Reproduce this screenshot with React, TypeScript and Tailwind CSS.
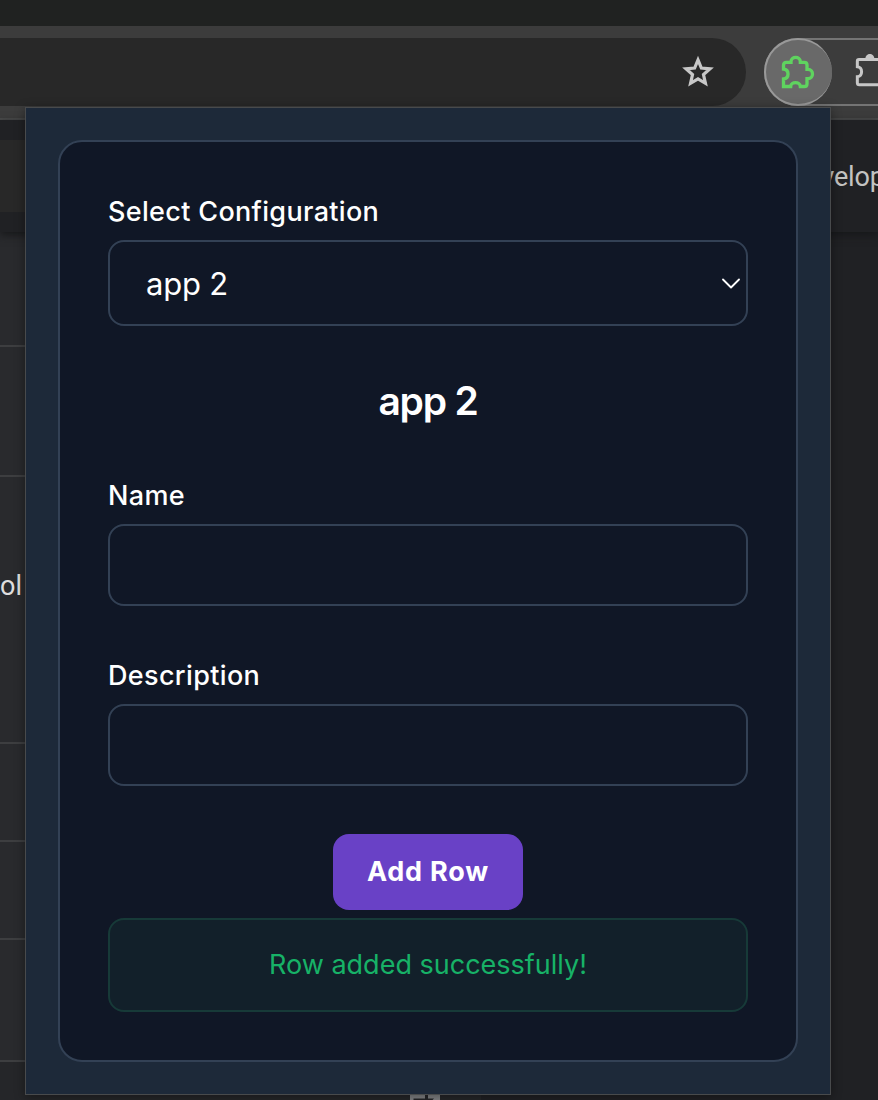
import { useState } from "react";

function StarIcon() {
  return (
    <svg className="h-[34px] w-[34px]" viewBox="0 0 96 96" fill="none" stroke="#c7c7c7" strokeWidth="9">
      <path d="M48 14 L57.500 37 L82 39 L63.500 55.500 L69 80 L48 67.500 L27 80 L32.500 55.500 L14 39 L38.500 37 Z" />
    </svg>
  );
}

function ExtensionIcon() {
  return (
    <svg className="h-9 w-9" viewBox="360 162 108 108" fill="none" stroke="#5fd35f" strokeWidth="10">
      <path d="M370.500 259.500 V237 C379 236 384 231 384 222 C384 213 379 208 370.500 207 V196 Q370.500 187 379 187 H393 V185 C393 168 421 168 421 185 V187 H433 Q441 187 441 195 V208 H444 C462 208 462 236 444 236 H441 V251 Q441 259.500 433 259.500 H421 C420 244 393 244 392 259.500 Z" />
    </svg>
  );
}

function PuzzleMenuIcon() {
  return (
    <svg className="h-9 w-6 shrink-0" viewBox="582 162 72 108" fill="none" stroke="#c7c7c7" strokeWidth="9">
      <path d="M660 178.500 H597 Q592 178.500 592 184 V200 C609 202 609 228 592 230 V248 Q592 254 598 254 H660" />
      <path d="M616 177 C616 157 643 157 643 177 Z" fill="#c7c7c7" stroke="none" />
    </svg>
  );
}

function OpenIcon() {
  return (
    <svg className="h-8 w-[30px]" viewBox="0 0 30 32" fill="none" stroke="#828486" strokeWidth="3.500">
      <path d="M15 1.750 H1.750 V28 H28 V17 M18 1.750 H28.250 V12 M28 2 L11 19" />
    </svg>
  );
}

function BrowserBackdrop() {
  return (
    <div className="flex h-full flex-col">
      <div className="h-[26px] shrink-0 bg-[#202221]" />
      <div className="flex h-[94px] shrink-0 items-start border-b-2 border-[#4a4b4b] bg-[#3c3c3c] pt-3">
        <div className="flex h-[68px] w-[746px] shrink-0 items-center justify-end rounded-r-full bg-[#282828] pr-[31px]">
          <StarIcon />
        </div>
        <div className="ml-[18px] flex h-[68px] w-[180px] shrink-0 items-center rounded-l-full border-2 border-[#747474]">
          <div className="-ml-0.5 flex h-[68px] w-[68px] shrink-0 items-center justify-center rounded-full border-2 border-r-0 border-[#999999] bg-[#696969] pr-0.5">
            <ExtensionIcon />
          </div>
          <div className="ml-[22px]">
            <PuzzleMenuIcon />
          </div>
        </div>
      </div>
      <div className="z-10 flex h-[112px] shrink-0 items-center justify-between bg-[#202124] shadow-[0_3px_8px_#17181a]">
        <div className="h-[72px] w-[600px] bg-[#282828]" />
        <span className="mr-[-104px] whitespace-nowrap pt-[3px] text-[27px] tracking-[-0.2px] text-[#c3c3c1]" style={{ fontFamily: "Roboto, sans-serif" }}>
          Developer mode
        </span>
      </div>
      <div className="flex min-h-0 flex-1">
        <div className="flex w-[481px] flex-col overflow-hidden bg-[#292a2d] text-[27px] text-[#dedede]" style={{ fontFamily: "Roboto, sans-serif" }}>
          <div className="h-[115px] shrink-0 border-b-2 border-[#3d3e40]" />
          <div className="h-[130px] shrink-0 border-b-2 border-[#3d3e40]" />
          <div className="flex h-[267px] shrink-0 items-start border-b-2 border-[#3d3e40] pt-[89px]">
            <span>ol</span>
          </div>
          <div className="h-[98px] shrink-0 border-b-2 border-[#3d3e40]" />
          <div className="h-[98px] shrink-0 border-b-2 border-[#3d3e40]" />
          <div className="h-[122px] shrink-0 border-b-2 border-[#3d3e40]" />
          <div className="flex flex-1 justify-end bg-[#252629] pr-[41px] pt-[33px]">
            <OpenIcon />
          </div>
        </div>
        <div className="flex-1 bg-[#202124]" />
      </div>
    </div>
  );
}

function Field({ id, label, className }: { id: string; label: string; className: string }) {
  return (
    <div className={className}>
      <label htmlFor={id} className="block h-10 text-[27px] leading-[40px] font-medium tracking-[0.35px]">
        {label}
      </label>
      <input
        id={id}
        className="mt-2 block h-[82px] w-full rounded-2xl border-2 border-[#334155] bg-transparent px-6 text-[31px] outline-none"
      />
    </div>
  );
}

function ConfigPopup() {
  const [config, setConfig] = useState("app 2");
  return (
    <div
      className="absolute top-[107px] left-[25px] z-20 h-[988px] w-[806px] border border-[#484a4c] bg-[#1d2939] p-8 text-white shadow-[0_2px_10px_rgba(0,0,0,0.4)]"
      style={{ fontFamily: "Inter, sans-serif" }}
    >
      <div className="flex h-full flex-col rounded-3xl border-2 border-[#334155] bg-[#101726] px-12 pt-[50px]">
        <label htmlFor="config" className="h-10 text-[27px] leading-[40px] font-medium tracking-[0.33px]">
          Select Configuration
        </label>
        <div className="mt-2 flex h-[86px] shrink-0 items-center rounded-2xl border-2 border-[#334155] pr-1.5">
          <select
            id="config"
            value={config}
            onChange={(event) => setConfig(event.target.value)}
            className="h-full flex-1 appearance-none bg-transparent pt-0.5 pl-9 text-[31px] tracking-[-0.2px] outline-none"
          >
            <option>app 2</option>
          </select>
          <svg className="h-[11px] w-[18px]" viewBox="0 0 18 11" fill="none" stroke="white" strokeWidth="1.800" strokeLinecap="round" strokeLinejoin="round">
            <path d="M1 1.500 L9 9.500 L17 1.500" />
          </svg>
        </div>
        <h1 className="mt-[51px] text-center text-[39px] leading-[48px] font-semibold tracking-[-1.2px]">{config}</h1>
        <Field id="name" label="Name" className="mt-[51px]" />
        <Field id="description" label="Description" className="mt-[50px]" />
        <button className="mt-12 h-[76px] w-[190px] shrink-0 self-center rounded-2xl bg-[#6941c6] text-[27px] font-bold tracking-[0.8px]">
          Add Row
        </button>
        <div className="mt-2 flex h-[94px] shrink-0 items-center justify-center rounded-2xl border-2 border-[#173a38] bg-[#12202a] pt-px text-[27px] text-[#17b267]">
          Row added successfully!
        </div>
      </div>
    </div>
  );
}

export default function App() {
  return (
    <div className="relative h-[1100px] w-[878px] overflow-hidden bg-[#202124]">
      <BrowserBackdrop />
      <ConfigPopup />
    </div>
  );
}
